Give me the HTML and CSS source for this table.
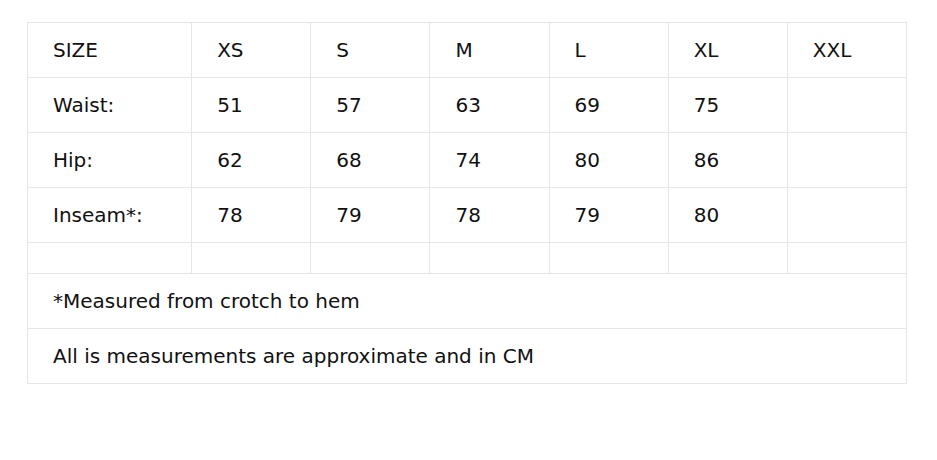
FILE: index.html
```html
<!DOCTYPE html>
<html>
<head>
<meta charset="utf-8">
<link rel="stylesheet" href="styles.css">
</head>
<body>
<div class="wrap">
<table class="size-table">
<colgroup>
<col class="c-first"><col class="c"><col class="c"><col class="c"><col class="c"><col class="c"><col class="c">
</colgroup>
<tbody>
<tr><td>SIZE</td><td>XS</td><td>S</td><td>M</td><td>L</td><td>XL</td><td>XXL</td></tr>
<tr><td>Waist:</td><td>51</td><td>57</td><td>63</td><td>69</td><td>75</td><td></td></tr>
<tr><td>Hip:</td><td>62</td><td>68</td><td>74</td><td>80</td><td>86</td><td></td></tr>
<tr><td>Inseam*:</td><td>78</td><td>79</td><td>78</td><td>79</td><td>80</td><td></td></tr>
<tr><td></td><td></td><td></td><td></td><td></td><td></td><td></td></tr>
<tr><td colspan="7">*Measured from crotch to hem</td></tr>
<tr><td colspan="7">All is measurements are approximate and in CM</td></tr>
</tbody>
</table>
</div>
</body>
</html>
```
FILE: styles.css
```css
html, body {
  margin: 0;
  padding: 0;
  background: #fff;
}
.wrap {
  padding: 22px 30px 0 27px;
}
.size-table {
  border-collapse: collapse;
  width: 880px;
  table-layout: fixed;
  font-family: "DejaVu Sans", sans-serif;
  font-size: 20px;
  color: #111;
}
.c-first { width: 164px; }
.c { width: 119px; }
.size-table td {
  border: 1px solid #e6e6e6;
  padding: 15px 25px;
  line-height: 24px;
  text-align: left;
  vertical-align: middle;
  white-space: nowrap;
}
```
